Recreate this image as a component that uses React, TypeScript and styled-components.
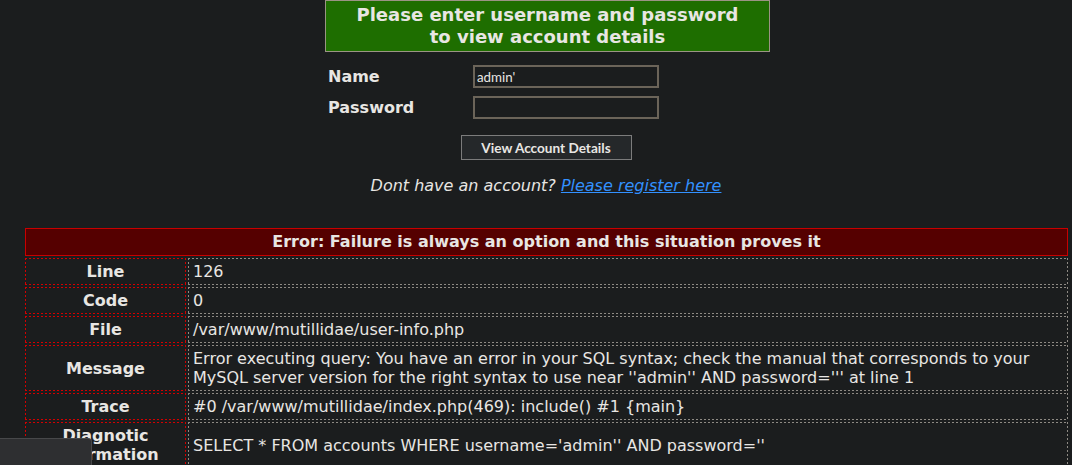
import React from 'react';
import styled, { createGlobalStyle } from 'styled-components';

const GlobalStyle = createGlobalStyle`
  html, body {
    margin: 0;
    padding: 0;
    background: #1b1d1e;
    color: #e8e6e3;
    font-family: 'DejaVu Sans', Verdana, sans-serif;
    font-size: 16px;
    overflow: hidden;
  }
`;

// 1px dashed outline with 2px dashes, drawn as background layers
const dashedOutline = (color: string) => `
  background:
    repeating-linear-gradient(90deg, ${color} 0 2px, transparent 2px 4px) left top / 100% 1px no-repeat,
    repeating-linear-gradient(90deg, ${color} 0 2px, transparent 2px 4px) left bottom / 100% 1px no-repeat,
    repeating-linear-gradient(180deg, ${color} 0 2px, transparent 2px 4px) left top / 1px 100% no-repeat,
    repeating-linear-gradient(180deg, ${color} 0 2px, transparent 2px 4px) right top / 1px 100% no-repeat;
`;

interface ErrorRow {
  label: string;
  value: string;
}

const rows: ErrorRow[] = [
  { label: 'Line', value: '126' },
  { label: 'Code', value: '0' },
  { label: 'File', value: '/var/www/mutillidae/user-info.php' },
  {
    label: 'Message',
    value:
      "Error executing query: You have an error in your SQL syntax; check the manual that corresponds to your MySQL server version for the right syntax to use near ''admin'' AND password=''' at line 1",
  },
  { label: 'Trace', value: '#0 /var/www/mutillidae/index.php(469): include() #1 {main}' },
  {
    label: 'Diagnotic Information',
    value: "SELECT * FROM accounts WHERE username='admin'' AND password=''",
  },
];

const App: React.FC = () => {
  return (
    <>
      <GlobalStyle />
      <Page>
        <LoginPanel>
          <Banner>
            Please enter username and password
            <br />
            to view account details
          </Banner>
          <FormGrid>
            <FieldLabel>Name</FieldLabel>
            <TextInput type='text' defaultValue="admin'" />
            <FieldLabel>Password</FieldLabel>
            <TextInput type='password' />
          </FormGrid>
          <SubmitButton type='button'>View Account Details</SubmitButton>
          <RegisterLine>
            Dont have an account? <RegisterLink href='#'>Please register here</RegisterLink>
          </RegisterLine>
        </LoginPanel>

        <ErrorTable>
          <tbody>
            <tr>
              <ErrorHeader colSpan={2}>
                Error: Failure is always an option and this situation proves it
              </ErrorHeader>
            </tr>
            {rows.map((row) => (
              <tr key={row.label}>
                <LabelCell>{row.label}</LabelCell>
                <ValueCell>{row.value}</ValueCell>
              </tr>
            ))}
          </tbody>
        </ErrorTable>
      </Page>
      <StatusBubble />
    </>
  );
};

export default App;

const Page = styled.div`
  display: flex;
  flex-direction: column;
  width: 1072px;
`;

const LoginPanel = styled.div`
  display: flex;
  flex-direction: column;
  align-items: center;
  width: 445px;
  margin-left: 325px;
`;

const Banner = styled.div`
  box-sizing: border-box;
  width: 100%;
  height: 52px;
  padding: 3px 0 0;
  background-color: #1e6e00;
  border: 1px solid #9b9484;
  text-align: center;
  font-weight: bold;
  font-size: 18px;
  line-height: 22px;
  color: #e8e6e3;
`;

const FormGrid = styled.div`
  display: grid;
  grid-template-columns: 145px 186px;
  row-gap: 8px;
  align-items: center;
  align-self: flex-start;
  margin-top: 13px;
  padding-left: 3px;
`;

const FieldLabel = styled.div`
  font-weight: bold;
  font-size: 16px;
  line-height: 23px;
`;

const TextInput = styled.input`
  box-sizing: border-box;
  width: 186px;
  height: 23px;
  margin: 0;
  padding: 0 2px;
  background: #1b1d1e;
  border: 2px solid #6b6459;
  color: #e8e6e3;
  font-family: Lato, 'Noto Sans', sans-serif;
  font-size: 13.33px;
  outline: none;
`;

const SubmitButton = styled.button`
  box-sizing: border-box;
  width: 171px;
  height: 25px;
  margin-top: 16px;
  margin-right: 3px;
  padding: 0;
  background: #25282a;
  border: 1px solid #7c7c7c;
  color: #e8e6e3;
  font-family: Lato, 'Noto Sans', sans-serif;
  font-weight: bold;
  font-size: 13.6px;
  cursor: pointer;
`;

const RegisterLine = styled.div`
  margin-top: 16px;
  margin-right: 3px;
  font-style: italic;
  font-size: 16px;
  line-height: 19px;
  white-space: nowrap;
`;

const RegisterLink = styled.a`
  color: #3391ff;
  text-decoration: underline;
`;

const ErrorTable = styled.table`
  width: 1047px;
  margin: 31px 0 0 23px;
  border-spacing: 2px;
  font-size: 16px;
  line-height: 19px;
  color: #e8e6e3;
`;

const ErrorHeader = styled.th`
  padding: 3px 4px 4px;
  background-color: #550000;
  border: 1px solid #c80000;
  font-weight: bold;
  text-align: center;
`;

const LabelCell = styled.th`
  box-sizing: border-box;
  width: 161px;
  padding: 4px 5px;
  ${dashedOutline('#d40000')}
  font-weight: bold;
  text-align: center;
  vertical-align: middle;
`;

const ValueCell = styled.td`
  padding: 4px 5px;
  ${dashedOutline('#8e8a84')}
  text-align: left;
  vertical-align: middle;
`;

const StatusBubble = styled.div`
  position: fixed;
  left: 0;
  bottom: 0;
  box-sizing: border-box;
  width: 92px;
  height: 27px;
  background: #2e2f31;
  border: 1px solid #47484a;
  border-left: none;
  border-bottom: none;
  border-top-right-radius: 4px;
`;
